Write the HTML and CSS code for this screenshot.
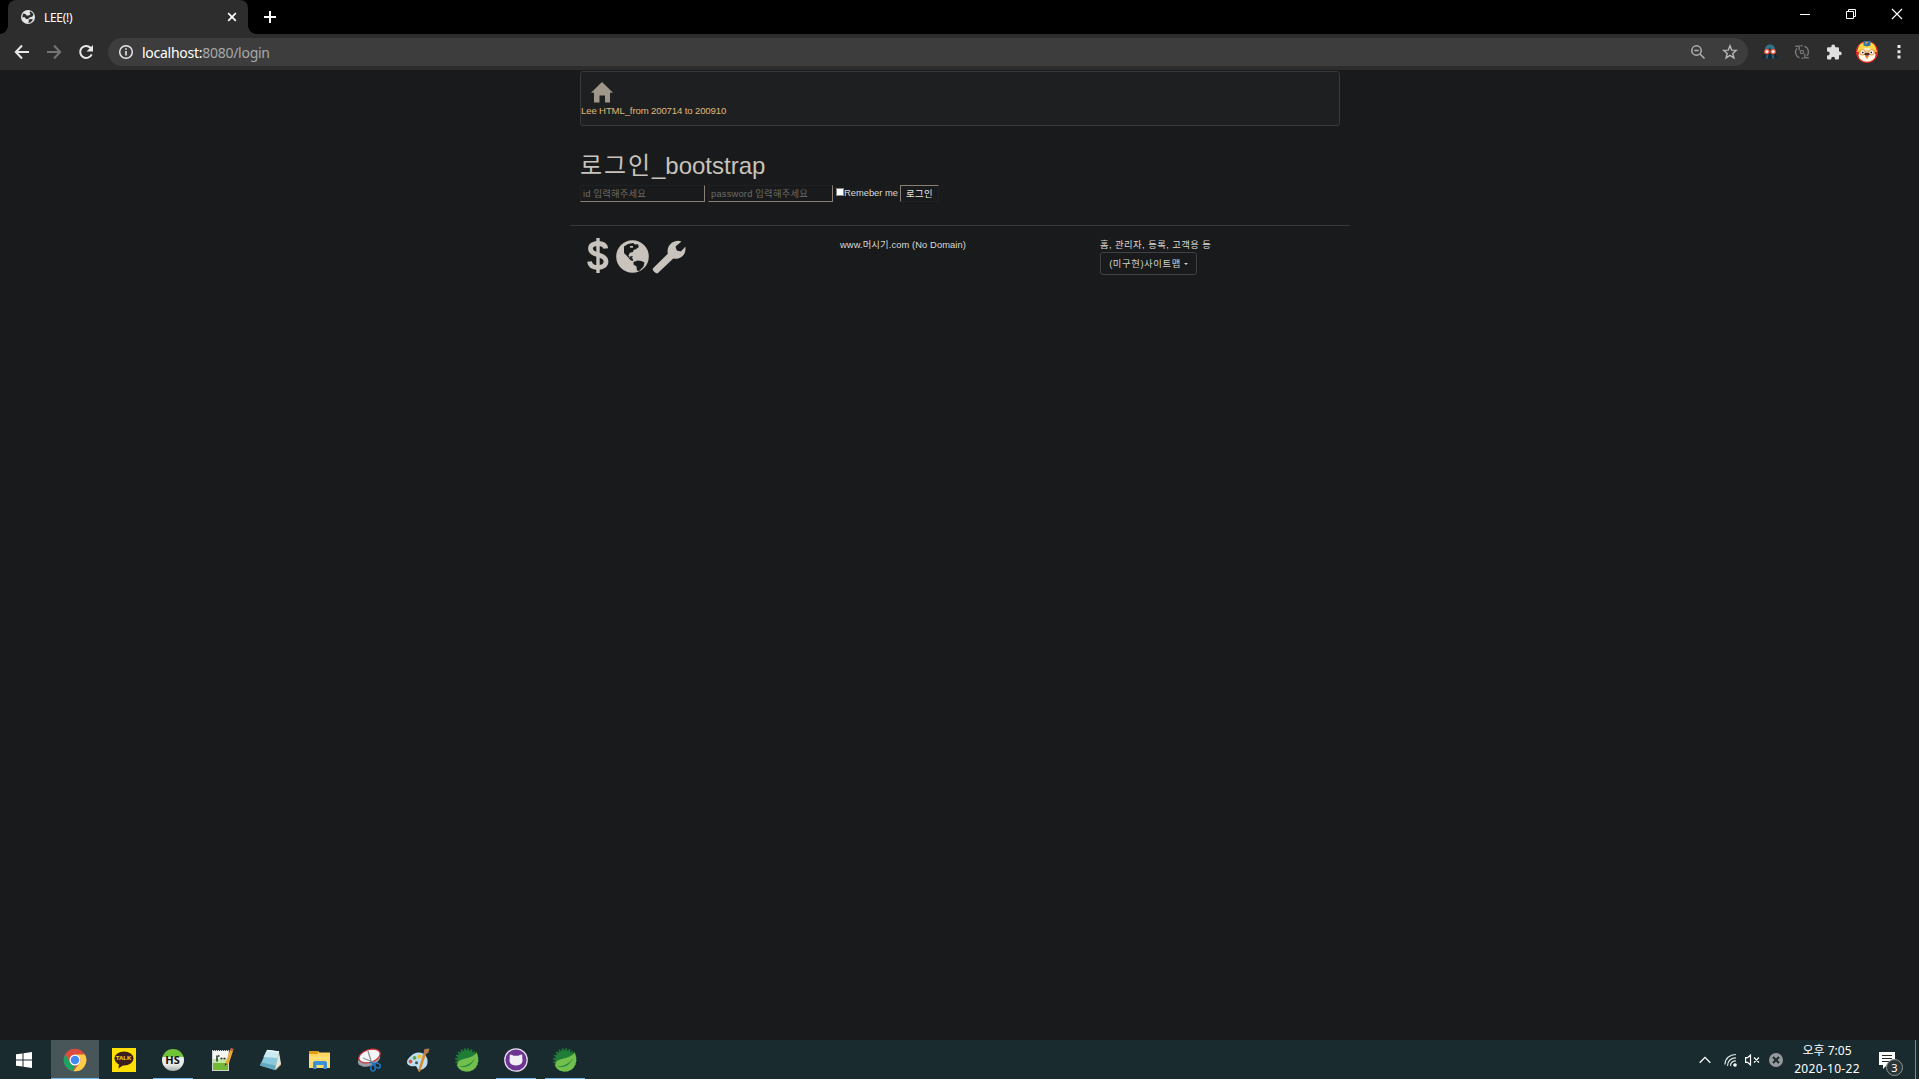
FILE: index.html
```html
<!DOCTYPE html>
<html lang="ko">
<head>
<meta charset="utf-8">
<title>LEE(!)</title>
<link rel="stylesheet" href="styles.css">
</head>
<body>
<div class="screen">
  <header class="titlebar">
    <div class="tab">
      <svg class="tab-icon" width="14" height="14" viewBox="0 0 14 14"><circle cx="7" cy="7" r="7" fill="#e2e4e6"/><path d="M2 3.500 4.500 4l1 1.500H8l1.500-1.500-1-1.500L9.500 1.200 12.500 4l-1 2.500-3 1-1.500 1.500H5L3.500 7 1.300 7.500M7.500 9.500 10 9l2 .5-2.500 3-2.500.3 1-1.500z" fill="#2d2d2d"/></svg>
      <span class="tab-title">LEE(!)</span>
      <svg class="tab-close" width="10" height="10" viewBox="0 0 10 10"><path d="m1.200 1.200 7.600 7.600m0-7.600L1.200 8.800" stroke="#fff" stroke-width="1.700"/></svg>
    </div>
    <svg class="newtab" width="12" height="12" viewBox="0 0 12 12"><path d="M6 0v12M0 6h12" stroke="#fff" stroke-width="2"/></svg>
    <div class="winbtns">
      <svg width="46" height="28" viewBox="0 0 46 28"><path d="M19 14.500h10" stroke="#fff"/></svg>
      <svg width="46" height="28" viewBox="0 0 46 28"><path d="M19.500 11.500h7v7h-7zM21.500 11V9.500h7v7H27" stroke="#fff" fill="none"/></svg>
      <svg width="46" height="28" viewBox="0 0 46 28"><path d="m19 9 10 10m0-10L19 19" stroke="#fff" stroke-width="1.200"/></svg>
    </div>
  </header>
  <div class="toolbar">
    <div class="navbtns">
      <svg width="16" height="16" viewBox="0 0 16 16"><path d="M15 8H2m6-6.500L1.800 8 8 14.500" stroke="#e8e8e8" stroke-width="2" fill="none"/></svg>
      <svg width="16" height="16" viewBox="0 0 16 16"><path d="M1 8h13M8 1.500 14.200 8 8 14.500" stroke="#757575" stroke-width="2" fill="none"/></svg>
      <svg width="16" height="16" viewBox="0 0 16 16"><path d="M13.700 10.300A6 6 0 1 1 12.500 3.700l1 1.200" stroke="#e8e8e8" stroke-width="2" fill="none"/><path d="M15 1v6.500H8.500z" fill="#e8e8e8"/></svg>
    </div>
    <div class="omnibox">
      <svg width="16" height="16" viewBox="0 0 16 16"><circle cx="8" cy="8" r="6.300" stroke="#e8e8e8" stroke-width="1.500" fill="none"/><path d="M7.200 7h1.600v4.500H7.200zM7.200 4.300h1.600v1.500H7.200z" fill="#e8e8e8"/></svg>
      <span class="url"><b>localhost:</b>8080/login</span>
      <div class="omni-actions">
        <svg width="16" height="16" viewBox="0 0 16 16"><circle cx="6.500" cy="6.500" r="4.700" stroke="#b0b0b0" stroke-width="1.500" fill="none"/><path d="M4.300 6.500h4.400M10 10l4.500 4.500" stroke="#b0b0b0" stroke-width="1.500"/></svg>
        <svg width="16" height="16" viewBox="0 0 16 16"><path d="m8 1.800 1.700 4.300 4.600.3-3.500 3 1.100 4.500L8 11.400l-3.900 2.500 1.100-4.500-3.500-3 4.600-.3z" stroke="#b8b8b8" stroke-width="1.400" fill="none"/></svg>
      </div>
    </div>
    <div class="extensions">
      <svg width="20" height="20" viewBox="0 0 20 20"><path d="M2 16.500 4.500 11V8C4.500 4 6.500 2.500 10 2.500S15.500 4 15.500 8v3l2.500 5.500z" fill="#122a38"/><path d="M5 7.500c0-3.500 2-5 5-5s5 1.500 5 5l-5-1z" fill="#347083"/><path d="M6.500 13h1.800l-.5 3.500H5.500zm5.200 0h1.800l1 3.500h-2.300z" fill="#2f6478"/><circle cx="6.900" cy="9.600" r="2.900" fill="#e4533f"/><circle cx="13.100" cy="9.600" r="2.900" fill="#e4533f"/><circle cx="6.900" cy="9.600" r="1.600" fill="#fbe9e4"/><circle cx="13.100" cy="9.600" r="1.600" fill="#fbe9e4"/></svg>
      <svg width="16" height="16" viewBox="0 0 16 16"><path d="M5.500 13.800A6 6 0 0 1 3 4.200M1.200 2.300h4v4M10.500 2.200A6 6 0 0 1 13 11.800M14.800 13.700h-4v-4M6.500 1.800h2M7.500 14.200h2" stroke="#747474" stroke-width="1.500" fill="none"/><circle cx="8" cy="8" r="1.700" fill="none" stroke="#747474" stroke-width="1.300"/></svg>
      <svg width="16" height="16" viewBox="0 0 16 16"><path d="M1 4.500a1.300 1.300 0 0 1 1.300-1.300h3V2.500a1.900 1.900 0 0 1 3.800 0v.7h2.600A1.300 1.300 0 0 1 13 4.500v3h.8a1.900 1.900 0 0 1 0 3.800H13v2.900a1.300 1.300 0 0 1-1.300 1.300H9v-.8a1.900 1.900 0 0 0-3.800 0v.8H2.300A1.300 1.300 0 0 1 1 14.200v-2.800h.8a1.900 1.900 0 0 0 0-3.800H1z" fill="#e0e0e0"/></svg>
      <svg class="avatar" width="22" height="22" viewBox="0 0 22 22"><circle cx="11" cy="11" r="11" fill="#df2d22"/><path d="M2 8c1-5 4-7 9-7s8 2 9 7l1 3H1z" fill="#ffd84a"/><path d="M7.500 0h7v4.500l-3.500 1-3.500-1z" fill="#2875aa"/><path d="M10 3.500V1.300h2" stroke="#f3a52c" fill="none"/><ellipse cx="11" cy="14" rx="8.500" ry="6.700" fill="#fff8e9"/><path d="M1 10h20" stroke="#e29b35"/><circle cx="6.500" cy="11.300" r="2.700" fill="#fff" stroke="#e58825" stroke-width="1"/><circle cx="15.500" cy="11.300" r="2.700" fill="#fff" stroke="#e58825" stroke-width="1"/><path d="M6 10.800h1.500v1.500H6zm8.500 0H16v1.500h-1.500z" fill="#222"/><ellipse cx="11" cy="13.200" rx="2.500" ry="1.600" fill="#5b2a22"/><path d="M9 15h4l-2 3z" fill="#ed7c28"/></svg>
      <svg class="dots" width="4" height="14" viewBox="0 0 4 14"><path d="M.5 0h3v3h-3zM.5 5.300h3v3h-3zM.5 10.600h3v3h-3z" fill="#e8e8e8"/></svg>
    </div>
  </div>

  <main class="page">
    <div class="container">
      <nav class="navbar">
        <svg class="home" width="22" height="21" viewBox="0 0 22 21"><path d="M11 0 22 10.700h-3V20.500h-5V13.500H8.500v7H3V10.700H0z" fill="#a0978b"/></svg>
        <span class="brand">Lee HTML_from 200714 to 200910</span>
      </nav>
      <h1 class="heading"><span class="heading-ko">로그인</span>_bootstrap</h1>
      <form class="login">
        <input class="field field-id" type="text" placeholder="id 입력해주세요">
        <input class="field field-pw" type="password" placeholder="password 입력해주세요">
        <span class="check"></span><label class="remember">Remeber me</label>
        <button class="submit" type="button">로그인</button>
      </form>
    </div>
    <footer class="footer">
      <div class="col icons">
        <svg width="22" height="36" viewBox="0 0 22 36"><path d="M18.800 10.500c-.5-3.500-3.300-5-7.800-5s-7.500 1.700-7.500 5 2.500 5 7.500 6.300 8 3 8 6.700-3.200 6-8 6-8-2-8.500-6" stroke="#c8c3bc" stroke-width="4.800" fill="none"/><path d="M11 0v35" stroke="#c8c3bc" stroke-width="3.400"/></svg>
        <svg class="globe" width="33" height="33" viewBox="0 0 33 33"><circle cx="16.500" cy="16.500" r="16.300" fill="#c8c3bc"/><path d="M8 6.500 12 4l5-1 2 1.500 3-.3.800 2.800-3 2.200-2.300.8-.5 2-3.200.8-1.300 2.700 1.500 2.500 2.500.3.800 2.700-2.800-.8-3.500-4.200-3-3zM17.500 22l4-1.500 4 .5 3 1.500-1 4-4.500 4.500-2-.5-.5-4-3-2zM12.500 17.500l3 1 1.500-2.500-3 .5z" fill="#181a1b"/><path d="M14 6h3v1.700h-3z" fill="#c8c3bc"/></svg>
        <svg class="wrench" width="34" height="34" viewBox="0 0 34 34"><path d="M.8 28.500 15.800 13.700C14.300 7 19 .8 26.500.7l3 .7-6 5 1.300 4.200 4 1 4.500-4.800c1.500 8-5.500 13.400-12 11.600L5.700 33.300c-1.500.7-5.700-2.500-4.900-4.800z" fill="#c8c3bc"/></svg>
      </div>
      <div class="col"><span class="domain">www.머시기.com (No Domain)</span></div>
      <div class="col">
        <div class="links">홈, 관리자, 등록, 고객용 등</div>
        <button class="sitemap" type="button"><span>(미구현)사이트맵</span><i class="caret"></i></button>
      </div>
    </footer>
  </main>

  <div class="taskbar">
    <div class="start"><svg width="16" height="16" viewBox="0 0 16 16"><path d="M0 2.300 6.500 1.400v6.100H0zM7.500 1.200 16 0v7.500H7.500zM0 8.500h6.500v6.100L0 13.700zM7.500 8.500H16V16l-8.500-1.200z" fill="#fff"/></svg></div>
    <div class="task active"><svg width="24" height="24" viewBox="0 0 24 24"><circle cx="12" cy="12" r="11.300" fill="#dd4b3e"/><path d="M2.300 6.300 7.200 14.800a5.500 5.500 0 0 0 4.800 2.700l-1.500 5.700A11.300 11.300 0 0 1 2.300 6.300z" fill="#1da362"/><path d="M12 6.500h9.900a11.300 11.300 0 0 1-11.500 16.700l6.400-8.400A5.500 5.500 0 0 0 12 6.500z" fill="#ffcd46"/><circle cx="12" cy="12" r="5.500" fill="#fff"/><circle cx="12" cy="12" r="4.300" fill="#4688f1"/></svg></div>
    <div class="task"><div class="kakao"><svg width="20" height="18" viewBox="0 0 20 18"><ellipse cx="10" cy="7.500" rx="9.500" ry="7" fill="#3b1e1e"/><path d="m5 12-.5 5.500 5-3.500z" fill="#3b1e1e"/></svg><span>TALK</span></div></div>
    <div class="task open"><div class="hs"><span>HS</span></div></div>
    <div class="task"><svg width="24" height="24" viewBox="0 0 24 24"><path d="M2 2h17v21H2z" fill="#f3f6f2"/><path d="M3 13h15v9H3z" fill="#72b936"/><path d="M3 11h15v4H3z" fill="#c2e4a8"/><path d="M2.500 2.500h16v20h-16z" stroke="#cfd3cf" fill="none"/><path d="M3 2.500h15" stroke="#444" stroke-dasharray="1 1"/><path d="M7 7.500v6M8 8h1.500M10.500 10.500h2m1 0h2" stroke="#183018" stroke-width="1.500"/><path d="M14.500 18 16 13.500 20 2l3 1-4 12z" fill="#eda934"/><path d="m20 2 3 1 .8-2-3-1z" fill="#cf6545"/><path d="m14.500 18 1-3 1.500 1z" fill="#222"/></svg></div>
    <div class="task"><svg width="24" height="24" viewBox="0 0 24 24"><path d="m19 3 3 14-5 5-4-2z" fill="#a98f58"/><path d="M8 2 20 3.500 16 22 1 17.500z" fill="#8ac9dc"/><path d="M8 2 20 3.500 18.500 10 4.500 9z" fill="#cceaf1"/><path d="m2 14.500 15 3-1 4.500-15-4.500z" fill="#62a9bf"/><path d="M8 2.500 20 4" stroke="#e7f8fb" stroke-width="1.500"/><path d="m20 4 2 12-6 6z" fill="#e1e7df"/></svg></div>
    <div class="task"><svg width="24" height="24" viewBox="0 0 24 24"><path d="M1 4V3h9l1.500 1.500H22V19H1z" fill="#ffd55f"/><path d="M1 3h9v3H1z" fill="#e29b13"/><path d="M1 8h21v12H1z" fill="#ffdc72"/><path d="M5 21v-6.500L6.500 13h11l1.500 1.500V21h-3.500v-4h-7v4z" fill="#3c91d5"/></svg></div>
    <div class="task"><svg width="24" height="24" viewBox="0 0 24 24"><ellipse cx="12" cy="11.500" rx="11.500" ry="6.500" fill="#9a9da3" transform="rotate(-18 12 11.500)"/><ellipse cx="12.500" cy="8" rx="11" ry="6.300" fill="#f5f6f7" stroke="#ce3034" stroke-width="1.200" transform="rotate(-18 12.500 8)"/><path d="m11 3 3.500 11.500M6 10l11 4.500" stroke="#8c9298" stroke-width="1.300"/><ellipse cx="16" cy="20" rx="2.200" ry="3" fill="none" stroke="#2372bb" stroke-width="1.600"/><ellipse cx="20.500" cy="17.500" rx="3" ry="2.200" fill="none" stroke="#2372bb" stroke-width="1.600" transform="rotate(30 20.500 17.500)"/><path d="m13 14.500 5 1-1 2" stroke="#2372bb" stroke-width="1.500" fill="none"/></svg></div>
    <div class="task"><svg width="24" height="24" viewBox="0 0 24 24"><path d="M5 8c4-5 13-5 16 2 2 6-1 11-7 12-4 0-2-4-5-4-4 1-8-1-8-4s2-4 4-6z" fill="#bddfed"/><circle cx="4.500" cy="13.500" r="1.900" fill="#d75545"/><circle cx="8.500" cy="9.800" r="1.900" fill="#62a646"/><circle cx="13.500" cy="8.500" r="2" fill="#efc336"/><circle cx="10.500" cy="14.800" r="1.500" fill="#34515d"/><path d="M20 6 14 24l-2-1L17.500 5z" fill="#d78a35"/><path d="m17.500 5 1-4 5-.5-1 4-3 2z" fill="#b17b4f"/></svg></div>
    <div class="task"><svg width="24" height="24" viewBox="0 0 24 24"><circle cx="12" cy="12" r="10" fill="#1f7d38"/><circle cx="12" cy="12" r="10.700" fill="none" stroke="#1f7d38" stroke-width="2.200" stroke-dasharray="1.800 1.560"/><path d="M21.500 4C26 14 21 23.500 12.500 23.500 6 23.500 1.500 20 2.500 15.500 4 9 17 12.500 21.500 4z" fill="#72bf4d"/><path d="M4 18.500c7 0 12.500-3 16-8.500-2.500 7-9 10.500-16 8.500z" fill="#238a3c"/></svg></div>
    <div class="task open"><svg width="24" height="24" viewBox="0 0 24 24"><circle cx="12" cy="12" r="11.200" fill="#6d3593" stroke="#e5dce9" stroke-width="1.300"/><path d="M6 6.500c2 0 3 .8 3.500 1.300h5c.5-.5 1.500-1.300 3.500-1.300.5 1.500.3 3 .2 3.500 1 3.500 0 7.500-6.200 7.500S4.800 13.500 5.800 10C5.600 9.500 5.500 8 6 6.500z" fill="#f1eef4"/></svg></div>
    <div class="task open"><svg width="24" height="24" viewBox="0 0 24 24"><circle cx="12" cy="12" r="10" fill="#1f7d38"/><circle cx="12" cy="12" r="10.700" fill="none" stroke="#1f7d38" stroke-width="2.200" stroke-dasharray="1.800 1.560"/><path d="M21.500 4C26 14 21 23.500 12.500 23.500 6 23.500 1.500 20 2.500 15.500 4 9 17 12.500 21.500 4z" fill="#72bf4d"/><path d="M4 18.500c7 0 12.500-3 16-8.500-2.500 7-9 10.500-16 8.500z" fill="#238a3c"/></svg></div>
    <div class="tray">
      <svg class="chev" width="12" height="8" viewBox="0 0 12 8"><path d="m.7 6.700 5.300-5.300 5.300 5.300" stroke="#fff" stroke-width="1.300" fill="none"/></svg>
      <svg class="wifi" width="14" height="14" viewBox="0 0 14 14"><path d="M1 11.500C1 5.500 5.500 1.500 12 1.500M3.500 13C3.500 8 7 4.800 12 4.800M6.500 13C6.500 9.800 8.800 7.800 12 7.800" stroke="#dce1e2" stroke-width="1.200" fill="none"/><circle cx="11" cy="12" r="1.800" fill="#fff"/></svg>
      <svg class="vol" width="15" height="12" viewBox="0 0 15 12"><path d="M.6 3.700h2L5.500 1v10L2.600 8.300h-2zM9 3.500l5 5m0-5-5 5" stroke="#fff" stroke-width="1.200" fill="none"/></svg>
      <svg class="cross" width="14" height="14" viewBox="0 0 14 14"><circle cx="7" cy="7" r="7" fill="#93999c"/><path d="m4 4 6 6m0-6-6 6" stroke="#1d2a2f" stroke-width="2"/></svg>
      <div class="clock"><span class="time">오후 7:05</span><span class="date">2020-10-22</span></div>
      <div class="notice"><svg width="16" height="17" viewBox="0 0 16 17"><path d="M0 0h16v13H8l-4 4v-4H0z" fill="#fff"/><path d="M3 3.500h10M3 6.500h10M3 9.500h7" stroke="#1c2b30"/></svg><span class="badge">3</span></div>
      <div class="peek"></div>
    </div>
  </div>
</div>
</body>
</html>
```
FILE: styles.css
```css
* { box-sizing: border-box; }
body { margin: 0; background: #181a1b; overflow: hidden; }
svg { display: block; flex: none; }
.screen { width: 1919px; height: 1079px; display: flex; flex-direction: column; font-family: "Noto Sans", "Noto Sans CJK KR", sans-serif; white-space: nowrap; }

.titlebar { height: 34px; background: #000; display: flex; padding-left: 8px; flex: none; }
.tab { width: 240px; height: 34px; background: #2d2d2d; border-radius: 8px 8px 0 0; display: flex; align-items: center; padding: 0 11px 0 13px; position: relative; }
.tab::before, .tab::after { content: ""; position: absolute; bottom: 0; width: 8px; height: 8px; }
.tab::before { left: -8px; background: radial-gradient(circle at 0 0, #000 7.500px, #2d2d2d 8px); }
.tab::after { right: -8px; background: radial-gradient(circle at 100% 0, #000 7.500px, #2d2d2d 8px); }
.tab-title { color: #fff; font-size: 12px; margin-left: 9px; letter-spacing: -0.3px; flex: 1; }
.newtab { margin: 11px 0 0 16px; }
.winbtns { margin-left: auto; display: flex; }

.toolbar { height: 36px; background: #2d2d2d; display: flex; align-items: center; flex: none; }
.navbtns { display: flex; gap: 16px; padding-left: 14px; width: 108px; }
.omnibox { width: 1640px; height: 28px; border-radius: 14px; background: #3d3d3d; display: flex; align-items: center; padding: 0 10px; }
.url { color: #a8a8a8; font-size: 14px; margin-left: 8px; letter-spacing: -0.27px; }
.url b { color: #fff; font-weight: 400; }
.omni-actions { display: flex; gap: 16px; margin-left: auto; }
.extensions { display: flex; align-items: center; flex: 1; padding-left: 12px; }
.extensions svg:nth-child(2) { margin-left: 14px; }
.extensions svg:nth-child(3) { margin-left: 16px; }
.extensions .avatar { margin-left: 14px; }
.extensions .dots { margin-left: 19px; }

.page { flex: 1; padding: 1px 0 0 570px; font-family: "Liberation Sans", "Noto Sans CJK KR", sans-serif; font-size: 9.33px; color: #dedbd6; }
.container { padding-left: 10px; width: 770px; }
.navbar { height: 55px; border: 1px solid #36393b; border-radius: 3px; background: #1d1f20; padding-top: 10px; display: flex; flex-direction: column; }
.home { margin-left: 10px; }
.brand { color: #e1b878; line-height: 14px; margin-top: 1px; font-size: 9.600px; letter-spacing: -0.14px; }
.heading { margin: 25px 0 0; font-size: 24px; line-height: 30px; font-weight: 400; color: #c8c3bc; height: 34px; }
.heading-ko { letter-spacing: 1.900px; }
.login { display: flex; height: 17px; }
.field { width: 125px; height: 17px; margin: 0 3px 0 0; padding: 0 2px; border: 1px solid #1e2021; border-right-color: #8a8076; border-bottom-color: #8a8076; background: #181a1b; font: inherit; color: #d6d2cb; outline: 0; }
.field::placeholder { color: #706c66; opacity: 1; letter-spacing: 0.2px; }
.check { width: 8px; height: 8px; background: #fff; border: 1px solid #888; margin: 3px 0 0; }
.remember { line-height: 16px; }
.submit { margin-left: 2px; width: 39px; height: 17px; border: 1px solid #1e2021; border-top-color: #8a8076; border-left-color: #8a8076; background: #181a1b; color: #e8e6e3; font: inherit; padding: 0; line-height: 14px; letter-spacing: 0.4px; }
.footer { margin-top: 23px; width: 780px; border-top: 1px solid #36393b; display: flex; padding-top: 12px; }
.col { width: 260px; padding-left: 10px; line-height: 14px; }
.col.icons { display: flex; padding-left: 17px; }
.globe { margin: 2px 0 0 7px; }
.wrench { margin: 2px 0 0 3px; }
.domain { letter-spacing: 0.1px; }
.links { letter-spacing: 0.43px; }
.sitemap { height: 23px; width: 97px; display: flex; align-items: center; justify-content: center; gap: 3px; border: 1px solid #3e4244; border-radius: 3px; background: #181a1b; color: #d6d2cb; font: inherit; padding: 0; letter-spacing: 0.6px; }
.caret { border: 2px solid transparent; border-top-color: #d6d2cb; border-bottom: 0; }

.taskbar { height: 39px; background: #1a2b30; display: flex; flex: none; }
.start { width: 51px; display: flex; align-items: center; padding-left: 16px; }
.task { width: 49px; display: flex; align-items: center; justify-content: center; position: relative; }
.task.active { background: #48565a; width: 48px; }
.task.open::after, .task.active::after { content: ""; position: absolute; left: 5px; right: 4px; bottom: 0; height: 1px; background: #76b9ed; }
.task.active::after { left: 0; right: 0; }
.kakao { width: 24px; height: 24px; background: #ffe000; display: grid; place-items: center; }
.kakao svg, .kakao span { grid-area: 1 / 1; }
.kakao span { font: bold 6px/8px "Liberation Sans", sans-serif; color: #ffe000; margin-top: -4px; }
.hs { width: 22px; height: 22px; border-radius: 50%; background: linear-gradient(#70c236 0 34%, #e9eeeb 35% 70%, #a7ada9); display: grid; place-items: center; }
.hs span { font: bold 11px/12px "Open Sans", sans-serif; color: #111; }
.tray { margin-left: auto; display: flex; align-items: center; color: #fff; }
.wifi { margin-left: 13px; }
.vol { margin-left: 7px; }
.cross { margin-left: 9px; }
.clock { display: flex; flex-direction: column; align-items: center; width: 70px; margin-left: 9px; font-size: 12px; line-height: 18px; letter-spacing: 0.3px; }
.time { letter-spacing: 0; }
.notice { width: 26px; height: 39px; margin-left: 17px; padding-top: 12px; position: relative; }
.badge { position: absolute; left: 7px; top: 19px; width: 17px; height: 17px; border: 1px solid #8b9497; border-radius: 50%; background: #2b3437; font-size: 11px; line-height: 15px; text-align: center; }
.peek { width: 4px; height: 39px; border-left: 1px solid #7b878a; margin-left: 10px; }
```
